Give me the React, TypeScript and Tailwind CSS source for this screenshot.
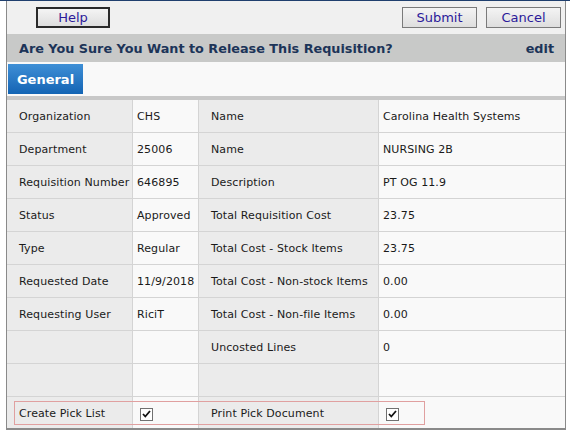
import React from "react";

const rows: [string, string, string, string][] = [
  ["Organization", "CHS", "Name", "Carolina Health Systems"],
  ["Department", "25006", "Name", "NURSING 2B"],
  ["Requisition Number", "646895", "Description", "PT OG 11.9"],
  ["Status", "Approved", "Total Requisition Cost", "23.75"],
  ["Type", "Regular", "Total Cost - Stock Items", "23.75"],
  ["Requested Date", "11/9/2018", "Total Cost - Non-stock Items", "0.00"],
  ["Requesting User", "RiciT", "Total Cost - Non-file Items", "0.00"],
  ["", "", "Uncosted Lines", "0"],
  ["", "", "", ""],
];

function Check() {
  return (
    <span className="inline-flex w-[13px] h-[13px] border border-[#707070] bg-white items-center justify-center">
      <svg width="9" height="8" viewBox="0 0 9 8">
        <path d="M1 4 L3.3 6.5 L8 1" fill="none" stroke="#111" strokeWidth="1.8" />
      </svg>
    </span>
  );
}

export default function App() {
  const font = { fontFamily: '"DejaVu Sans", sans-serif' };
  return (
    <div className="w-[570px] h-[430px] bg-white overflow-hidden" style={font}>
      <div className="h-px bg-[#1f3f6e]" />
      <div className="ml-[6px] w-[560px] h-[429px] border-l border-r border-b-2 border-[#8a8a8a] flex flex-col overflow-hidden">
        <div className="h-[33px] shrink-0 bg-[#f0f0f0] flex items-start pt-[6px] pl-[29px] pr-[4px]">
          <button className="w-[74px] h-[21px] border-2 border-[#2a2a2a] bg-gradient-to-b from-[#f4f4f4] to-[#dedede] text-[13px] text-[#2b1a9a] leading-none">
            Help
          </button>
          <div className="ml-auto flex gap-[9px]">
            <button className="w-[75px] h-[21px] border border-[#7a7a7a] bg-gradient-to-b from-[#f4f4f4] to-[#dedede] text-[13px] text-[#2b1a9a] leading-none">
              Submit
            </button>
            <button className="w-[75px] h-[21px] border border-[#7a7a7a] bg-gradient-to-b from-[#f4f4f4] to-[#dedede] text-[13px] text-[#2b1a9a] leading-none">
              Cancel
            </button>
          </div>
        </div>
        <div className="h-[28px] shrink-0 bg-[#c8c9c8] flex items-center pt-[2px] pl-[12px] pr-[11px] text-[12.8px] font-bold text-[#1c3458]">
          <span>Are You Sure You Want to Release This Requisition?</span>
          <span className="ml-auto">edit</span>
        </div>
        <div className="h-[34px] shrink-0 bg-[#f9f9f9] pt-[2px] pl-px">
          <div className="w-[75px] h-[30px] bg-gradient-to-b from-[#3e8fd6] to-[#1264b4] text-white font-bold text-[13px] flex items-center justify-center pt-px">
            General
          </div>
        </div>
        <div className="h-[4px] shrink-0 bg-[#c8c8c8]" />
        <div className="relative flex-1 min-h-0 grid grid-cols-[126px_66px_180px_1fr] grid-rows-[repeat(9,33px)_32px] text-[11px] tracking-[0.1px] text-[#1a1a1a]">
          {rows.map((r, i) => (
            <React.Fragment key={i}>
              <div className="bg-[#ebebeb] border-r border-b border-[#d4d4d4] flex items-center pt-[3px] pl-[12px] whitespace-nowrap">{r[0]}</div>
              <div className="bg-[#f9f9f9] border-r border-b border-[#d4d4d4] flex items-center pt-[3px] pl-[4px]">{r[1]}</div>
              <div className="bg-[#ebebeb] border-r border-b border-[#d4d4d4] flex items-center pt-[3px] pl-[12px]">{r[2]}</div>
              <div className="bg-[#f9f9f9] border-b border-[#d4d4d4] flex items-center pt-[3px] pl-[4px]">{r[3]}</div>
            </React.Fragment>
          ))}
          <div className="bg-[#ebebeb] border-r border-[#d4d4d4] flex items-center pt-[2px] pl-[12px]">Create Pick List</div>
          <div className="bg-[#f9f9f9] border-r border-[#d4d4d4] flex items-center pt-[2px] pl-[7px]"><Check /></div>
          <div className="bg-[#ebebeb] border-r border-[#d4d4d4] flex items-center pt-[2px] pl-[12px]">Print Pick Document</div>
          <div className="bg-[#f9f9f9] flex items-center pt-[2px] pl-[7px]"><Check /></div>
          <div className="absolute left-[7px] top-[301px] w-[411px] h-[24px] border border-[#e0a0a0] pointer-events-none" />
        </div>
      </div>
    </div>
  );
}
